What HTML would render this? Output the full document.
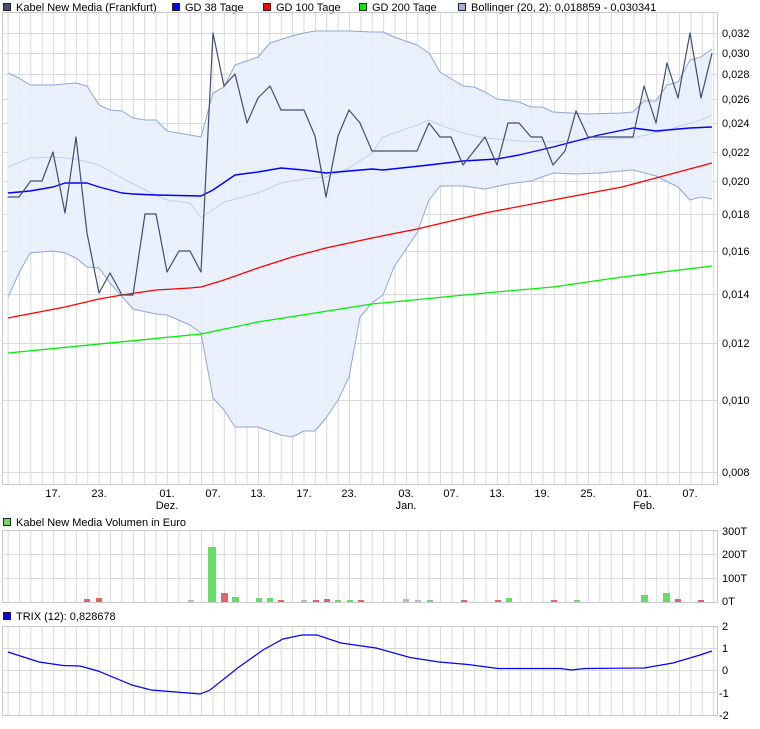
<!DOCTYPE html>
<html><head><meta charset="utf-8"><style>
body{margin:0;background:#fff;width:760px;height:724px;overflow:hidden;font-family:"Liberation Sans",sans-serif}
svg text{font-family:"Liberation Sans",sans-serif;font-size:11px;fill:#000}
</style></head><body>
<svg width="760" height="724" viewBox="0 0 760 724" xmlns="http://www.w3.org/2000/svg">
<defs>
<pattern id="vg" x="7.6" y="0" width="11.38" height="724" patternUnits="userSpaceOnUse">
<line x1="0.5" y1="0" x2="0.5" y2="724" stroke="#d9d9d9" stroke-width="1"/>
</pattern>
</defs>
<!-- legend -->
<rect x="3.5" y="3.5" width="7" height="7" fill="#3f5178" stroke="#222"/>
<text x="16" y="11">Kabel New Media (Frankfurt)</text>
<rect x="172.5" y="3.5" width="7" height="7" fill="#0000ff" stroke="#222"/>
<text x="185" y="11">GD 38 Tage</text>
<rect x="263.5" y="3.5" width="7" height="7" fill="#ff0000" stroke="#222"/>
<text x="276" y="11">GD 100 Tage</text>
<rect x="359.5" y="3.5" width="7" height="7" fill="#00ee00" stroke="#222"/>
<text x="372" y="11">GD 200 Tage</text>
<rect x="458.5" y="3.5" width="7" height="7" fill="#9fb3e0" stroke="#222"/>
<text x="471" y="11">Bollinger (20, 2): 0,018859 - 0,030341</text>

<!-- main panel -->
<rect x="2.5" y="12.5" width="715" height="472" fill="url(#vg)"/>
<g stroke="#d9d9d9" stroke-width="1">
<line x1="3" y1="33.5" x2="717" y2="33.5"/><line x1="3" y1="53.5" x2="717" y2="53.5"/>
<line x1="3" y1="74.5" x2="717" y2="74.5"/><line x1="3" y1="99.5" x2="717" y2="99.5"/>
<line x1="3" y1="123.5" x2="717" y2="123.5"/><line x1="3" y1="152.5" x2="717" y2="152.5"/>
<line x1="3" y1="181.5" x2="717" y2="181.5"/><line x1="3" y1="214.5" x2="717" y2="214.5"/>
<line x1="3" y1="251.5" x2="717" y2="251.5"/><line x1="3" y1="294.5" x2="717" y2="294.5"/>
<line x1="3" y1="343.5" x2="717" y2="343.5"/><line x1="3" y1="400.5" x2="717" y2="400.5"/>
<line x1="3" y1="472.5" x2="717" y2="472.5"/>
</g>
<!-- bollinger band -->
<polygon fill="#e6eefb" fill-opacity="0.85" stroke="none" points="8,73 19,78 30,85 53,85 76,83 87,86 99,105 110,110 122,111 133,118 145,120 156,120 167,131 190,135 201,137 213,93 224,87 235,65 258,57 270,43 292,36 304,33 315,31 349,31 372,32 383,32 394,37 417,45 429,53 440,72 463,86 474,87 485,92 497,99 519,102 531,107 542,107 553,112 588,114 622,113 633,112 644,101 656,101 667,85 678,82 690,60 701,57 712,49 712,199 701,197 690,200 678,187 656,176 633,170 599,173 576,174 553,173 531,181 508,184 485,189 463,186 440,186 429,200 417,233 394,267 383,295 372,303 360,317 349,377 338,400 326,418 315,431 304,431 292,437 281,435 258,427 235,427 224,410 213,398 201,333 190,325 167,315 156,314 133,309 110,283 99,268 87,267 76,258 65,253 53,251 30,253 19,273 8,297"/>
<g fill="none" stroke-width="1" stroke-linejoin="round">
<polyline stroke="#8fa6dc" points="8,73 19,78 30,85 53,85 76,83 87,86 99,105 110,110 122,111 133,118 145,120 156,120 167,131 190,135 201,137 213,93 224,87 235,65 258,57 270,43 292,36 304,33 315,31 349,31 372,32 383,32 394,37 417,45 429,53 440,72 463,86 474,87 485,92 497,99 519,102 531,107 542,107 553,112 588,114 622,113 633,112 644,101 656,101 667,85 678,82 690,60 701,57 712,49"/>
<polyline stroke="#8fa6dc" points="8,297 19,273 30,253 53,251 65,253 76,258 87,267 99,268 110,283 133,309 156,314 167,315 190,325 201,333 213,398 224,410 235,427 258,427 281,435 292,437 304,431 315,431 326,418 338,400 349,377 360,317 372,303 383,295 394,267 417,233 429,200 440,186 463,186 485,189 508,184 531,181 553,173 576,174 599,173 633,170 656,176 678,187 690,200 701,197 712,199"/>
<polyline stroke="#bcd0f4" points="8,167 30,158 53,157 76,159 99,165 122,178 145,190 167,200 190,203 201,218 224,202 258,193 281,183 304,179 326,177 349,168 372,153 383,137 417,125 429,120 440,125 463,133 485,138 519,141 553,142 588,140 633,138 667,130 701,120 712,115"/>
<polyline stroke="#00ee00" stroke-width="1.3" points="8,353 201,334 258,322 372,304 485,293 553,287 622,277 712,266"/>
<polyline stroke="#ff0000" stroke-width="1.3" points="8,318 65,307 99,299 122,295 156,290 190,288 201,287 224,280 258,268 292,257 326,248 372,238 417,229 485,213 553,200 622,187 656,178 712,163"/>
<polyline stroke="#0000ff" stroke-width="1.4" points="8,193 30,191 53,187 65,183 87,183 99,187 122,193 133,194 156,195 201,196 213,190 235,175 258,172 281,168 304,170 326,173 349,171 372,169 383,170 429,165 463,161 497,159 519,155 553,147 599,135 633,128 656,131 690,128 712,127"/>
<polyline stroke="#3f4e72" stroke-width="1.2" points="7.6,197 19,197 30.7,181 42,181 53,152 65,213 76,137 87,233 99,293 110,273 122,295 133,295 145,214 156,214 167,272 179,251 190,251 201,272 213,33 224,86 235,74 247,123 258,98 270,86 281,110 292,110 304,110 315,136 326,197 338,136 349,110 360,123 372,151 383,151 394,151 406,151 417,151 429,123 440,137 451,137 463,165 474,151 485,137 497,165 508,123 519,123 531,137 542,137 553,165 565,151 576,111 588,137 599,137 610,137 622,137 633,137 644,86 656,123 667,63 678,98 690,33 701,98 712,53"/>
</g>
<rect x="2.5" y="12.5" width="715" height="472" fill="none" stroke="#c8c8c8"/>
<g>
<text x="722" y="37">0,032</text><text x="722" y="57">0,030</text><text x="722" y="78">0,028</text>
<text x="722" y="103">0,026</text><text x="722" y="127">0,024</text><text x="722" y="156">0,022</text>
<text x="722" y="185">0,020</text><text x="722" y="218">0,018</text><text x="722" y="255">0,016</text>
<text x="722" y="298">0,014</text><text x="722" y="347">0,012</text><text x="722" y="404">0,010</text>
<text x="722" y="476">0,008</text>
</g>
<g text-anchor="middle">
<text x="53" y="497">17.</text><text x="99" y="497">23.</text><text x="167" y="497">01.</text>
<text x="167" y="509">Dez.</text><text x="213" y="497">07.</text><text x="258" y="497">13.</text>
<text x="304" y="497">17.</text><text x="349" y="497">23.</text><text x="406" y="497">03.</text>
<text x="406" y="509">Jan.</text><text x="451" y="497">07.</text><text x="497" y="497">13.</text>
<text x="542" y="497">19.</text><text x="588" y="497">25.</text><text x="644" y="497">01.</text>
<text x="644" y="509">Feb.</text><text x="690" y="497">07.</text>
</g>

<!-- volume -->
<rect x="3.5" y="518.5" width="7" height="7" fill="#66dd66" stroke="#222"/>
<text x="16" y="526">Kabel New Media Volumen in Euro</text>
<rect x="2.5" y="530.5" width="715" height="72" fill="url(#vg)"/>
<g stroke="#d9d9d9"><line x1="3" y1="554.5" x2="717" y2="554.5"/><line x1="3" y1="578.5" x2="717" y2="578.5"/></g>
<g>
<rect x="84" y="599" width="6" height="3" fill="#e06666"/><rect x="96" y="598" width="6" height="4" fill="#e06666"/>
<rect x="188" y="600" width="6" height="2" fill="#bbbbbb"/>
<rect x="208" y="547" width="8" height="55" fill="#66dd66"/>
<rect x="221" y="593" width="7" height="9" fill="#e06666"/>
<rect x="232" y="597" width="7" height="5" fill="#66dd66"/>
<rect x="256" y="598" width="6" height="4" fill="#66dd66"/><rect x="267" y="598" width="6" height="4" fill="#66dd66"/>
<rect x="278" y="600" width="6" height="2" fill="#e06666"/><rect x="301" y="600" width="6" height="2" fill="#bbbbbb"/>
<rect x="313" y="600" width="6" height="2" fill="#e06666"/><rect x="324" y="599" width="6" height="3" fill="#e06666"/>
<rect x="335" y="600" width="6" height="2" fill="#66dd66"/><rect x="347" y="600" width="6" height="2" fill="#66dd66"/>
<rect x="358" y="600" width="6" height="2" fill="#e06666"/><rect x="403" y="599" width="6" height="3" fill="#bbbbbb"/>
<rect x="415" y="600" width="6" height="2" fill="#bbbbbb"/><rect x="427" y="600" width="6" height="2" fill="#66dd66"/>
<rect x="461" y="600" width="6" height="2" fill="#e06666"/><rect x="495" y="600" width="6" height="2" fill="#e06666"/>
<rect x="506" y="598" width="6" height="4" fill="#66dd66"/><rect x="551" y="600" width="6" height="2" fill="#e06666"/>
<rect x="574" y="600" width="6" height="2" fill="#66dd66"/>
<rect x="641" y="595" width="7" height="7" fill="#66dd66"/>
<rect x="663" y="593" width="7" height="9" fill="#66dd66"/>
<rect x="675" y="599" width="6" height="3" fill="#e06666"/>
<rect x="698" y="600" width="6" height="2" fill="#e06666"/>
</g>
<rect x="2.5" y="530.5" width="715" height="72" fill="none" stroke="#c8c8c8"/>
<text x="722" y="535">300T</text><text x="722" y="558">200T</text><text x="722" y="582">100T</text><text x="722" y="605">0T</text>

<!-- TRIX -->
<rect x="3.5" y="612.5" width="7" height="7" fill="#0000ff" stroke="#222"/>
<text x="16" y="620">TRIX (12): 0,828678</text>
<rect x="2.5" y="626.5" width="715" height="89" fill="url(#vg)"/>
<g stroke="#d9d9d9"><line x1="3" y1="648.5" x2="717" y2="648.5"/><line x1="3" y1="670.5" x2="717" y2="670.5"/><line x1="3" y1="692.5" x2="717" y2="692.5"/></g>
<polyline fill="none" stroke="#0000ff" stroke-width="1.2" points="8,652 39,662 63,665.5 80,666 98,671 132,685 151,690 176,692 200,694 210,690 239,667 263,650 283,639 302,635 317,635 341,643 376,648 410,657.5 439,662 468,664.5 498,668.5 561,668.5 571,670 585,668.5 644,668 673,663 700,655 712,651"/>
<rect x="2.5" y="626.5" width="715" height="89" fill="none" stroke="#c8c8c8"/>
<text x="722" y="630">2</text><text x="722" y="652">1</text><text x="722" y="674">0</text><text x="719" y="697">-1</text><text x="719" y="719">-2</text>
</svg>
</body></html>
